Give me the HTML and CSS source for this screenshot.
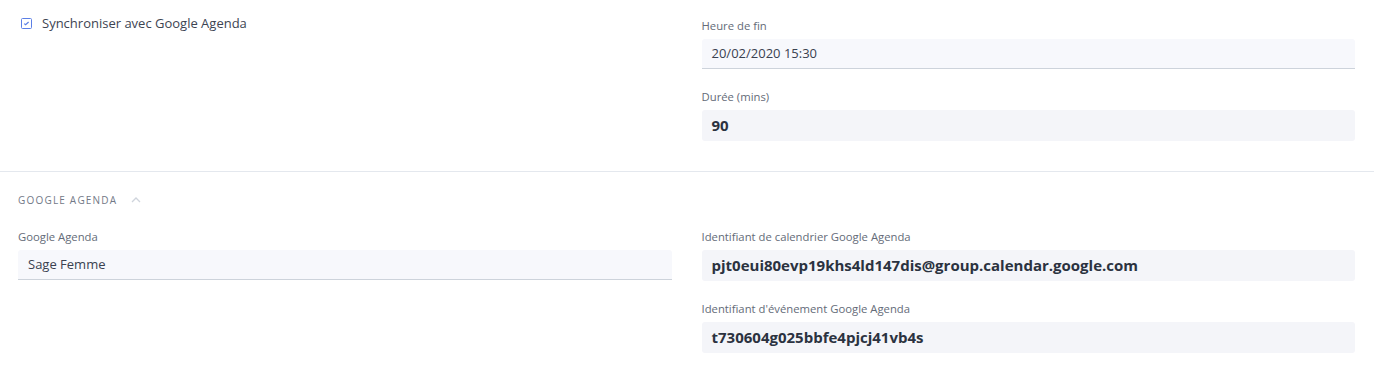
FILE: index.html
```html
<!DOCTYPE html>
<html lang="fr">
<head>
    <meta charset="UTF-8">
    <title>Rendez-vous</title>
    <link rel="stylesheet" href="styles.css">
</head>
<body>
    <div class="panel">
        <div class="grid">
            <div class="col">
                <label class="check">
                    <svg class="check-box" width="11" height="11" viewBox="0 0 11 11">
                        <rect x="0.5" y="0.5" width="10" height="10" rx="1" fill="#fff" stroke="#5b7fe6"/>
                        <path d="M3.2 5.6 L4.6 6.8 L7.6 4" fill="none" stroke="#5b7fe6" stroke-width="1.2"/>
                    </svg>
                    <span>Synchroniser avec Google Agenda</span>
                </label>
            </div>
            <div class="col">
                <div class="field">
                    <div class="field-label">Heure de fin</div>
                    <div class="input">20/02/2020 15:30</div>
                </div>
                <div class="field">
                    <div class="field-label">Durée (mins)</div>
                    <div class="readonly">90</div>
                </div>
            </div>
        </div>
    </div>

    <div class="panel section">
        <div class="section-title">
            Google Agenda
            <svg class="chevron" width="10" height="6" viewBox="0 0 10 6">
                <path d="M1 5 L5 1 L9 5" fill="none" stroke="#cfd4dc" stroke-width="1.3"/>
            </svg>
        </div>
        <div class="grid">
            <div class="col">
                <div class="field">
                    <div class="field-label">Google Agenda</div>
                    <div class="input">Sage Femme</div>
                </div>
            </div>
            <div class="col">
                <div class="field">
                    <div class="field-label">Identifiant de calendrier Google Agenda</div>
                    <div class="readonly">pjt0eui80evp19khs4ld147dis@group.calendar.google.com</div>
                </div>
                <div class="field">
                    <div class="field-label">Identifiant d'événement Google Agenda</div>
                    <div class="readonly">t730604g025bbfe4pjcj41vb4s</div>
                </div>
            </div>
        </div>
    </div>
</body>
</html>
```

FILE: styles.css
```css
body {
    margin: 0;
    background: #fff;
    font-family: "Open Sans", "Noto Sans", sans-serif;
    color: #3a4150;
}
.panel {
    padding: 18px 19px 9px 18px;
}
.section {
    border-top: 1px solid #e4e8ee;
    padding-top: 20px;
}
.grid {
    display: grid;
    grid-template-columns: 1fr 1fr;
    column-gap: 30px;
}
.check {
    display: flex;
    align-items: center;
    gap: 10px;
    margin-top: -3px;
    padding-left: 3px;
    font-size: 13px;
    line-height: 16px;
    color: #3d4452;
}
.check-box {
    flex: none;
}
.field {
    margin-bottom: 21px;
}
.field-label {
    font-size: 11.3px;
    line-height: 14px;
    color: #646b78;
    margin-top: 1px;
    margin-bottom: 6px;
}
.input {
    height: 29px;
    line-height: 29px;
    padding: 0 10px;
    font-size: 13px;
    background: #f7f8fc;
    border-bottom: 1px solid #cdd3db;
    border-radius: 3px 3px 0 0;
    color: #3a4150;
}
.readonly {
    height: 31px;
    line-height: 31px;
    padding: 0 10px;
    font-size: 15px;
    font-weight: bold;
    background: #f4f5f9;
    border-radius: 3px;
    color: #2b3240;
}
.section-title {
    display: flex;
    align-items: center;
    gap: 14px;
    font-size: 10px;
    line-height: 16px;
    text-transform: uppercase;
    letter-spacing: 1.2px;
    color: #727987;
    margin-bottom: 21px;
}
```
